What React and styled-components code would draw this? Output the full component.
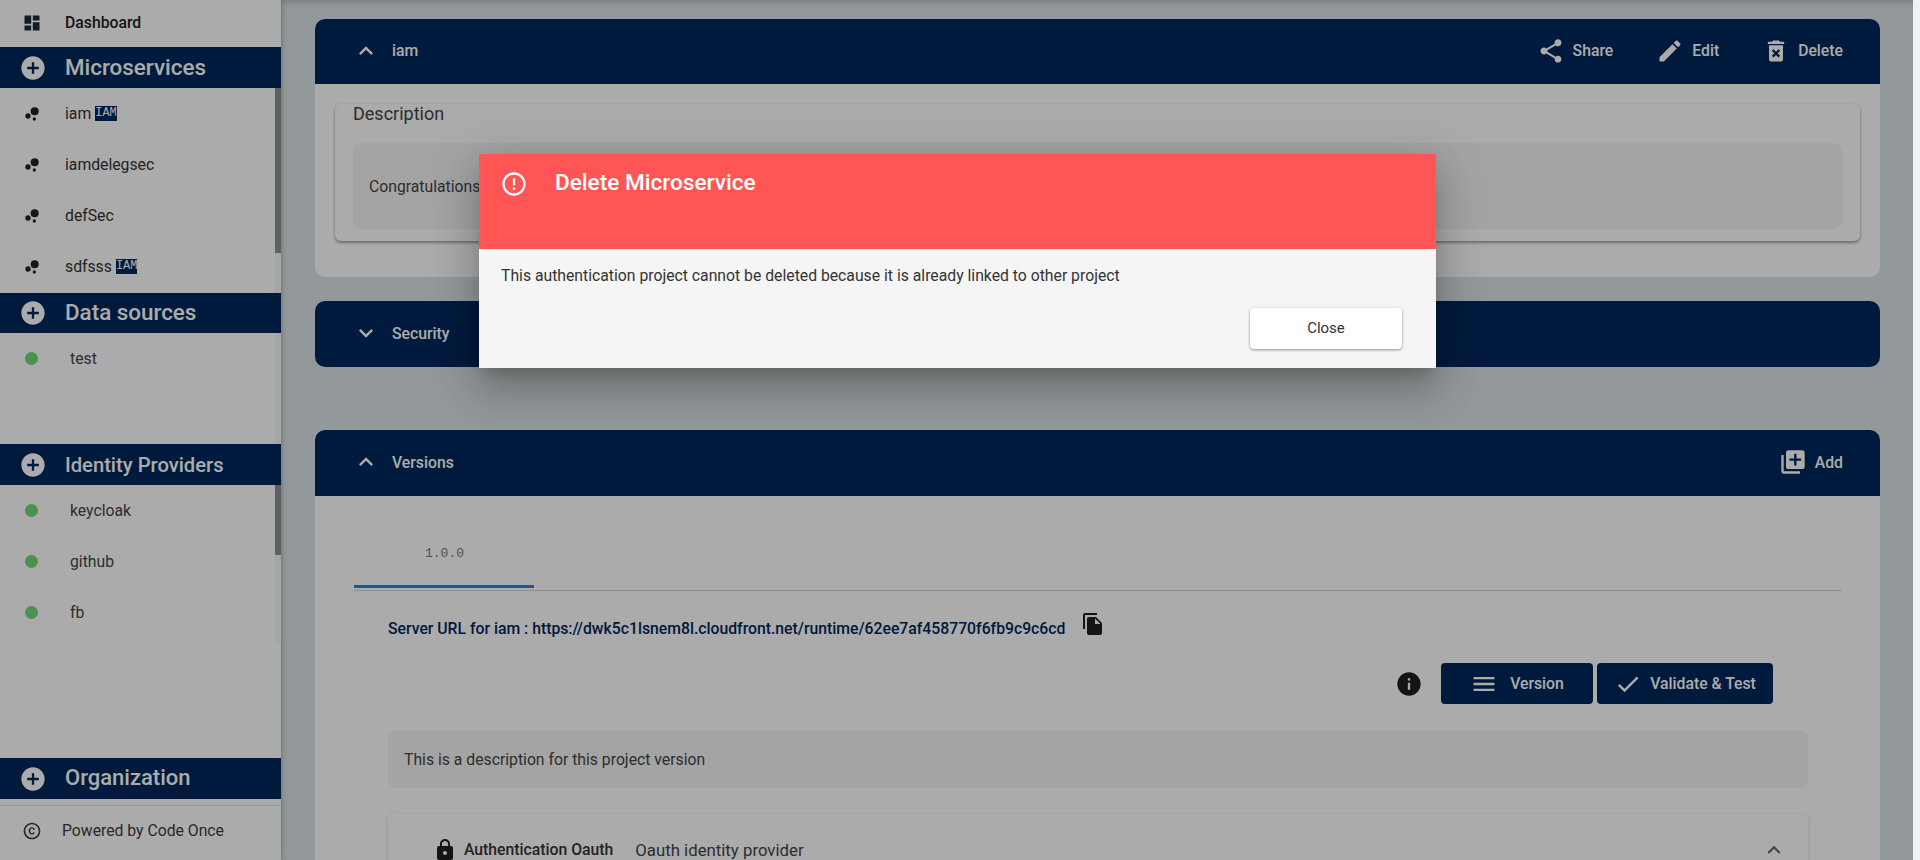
import React from "react";
import styled, { createGlobalStyle } from "styled-components";

const GlobalStyle = createGlobalStyle`
  html, body {
    margin: 0;
    height: 100%;
    overflow: hidden;
    background: #f1f1f1;
    font-family: Roboto, "Liberation Sans", sans-serif;
  }
  * { box-sizing: border-box; }
`;

const NAVY = "#00285b";

const paths = {
  dashboard: "M3 13h8V3H3v10zm0 8h8v-6H3v6zm10 0h8V11h-8v10zm0-18v6h8V3h-8z",
  addCircle: "M12 2C6.48 2 2 6.48 2 12s4.48 10 10 10 10-4.48 10-10S17.52 2 12 2zm5 11h-4v4h-2v-4H7v-2h4V7h2v4h4v2z",
  copyright: "M11.88 9.14c1.28.06 1.61 1.15 1.63 1.66h1.79c-.08-1.98-1.49-3.19-3.45-3.19C9.64 7.61 8 9 8 12.14c0 1.94.93 4.24 3.84 4.24 2.22 0 3.41-1.65 3.44-2.95h-1.79c-.03.59-.45 1.38-1.63 1.44-1.32-.04-1.86-1.07-1.86-2.73 0-2.87 1.27-2.98 1.88-3zM12 2C6.48 2 2 6.48 2 12s4.48 10 10 10 10-4.48 10-10S17.52 2 12 2zm0 18c-4.41 0-8-3.59-8-8s3.59-8 8-8 8 3.59 8 8-3.59 8-8 8z",
  share: "M18 16.08c-.76 0-1.44.3-1.96.77L8.91 12.7c.05-.23.09-.46.09-.7s-.04-.47-.09-.7l7.05-4.11c.54.5 1.25.81 2.04.81 1.66 0 3-1.34 3-3s-1.34-3-3-3-3 1.34-3 3c0 .24.04.47.09.7L8.04 9.81C7.5 9.31 6.79 9 6 9c-1.66 0-3 1.34-3 3s1.34 3 3 3c.79 0 1.5-.31 2.04-.81l7.12 4.16c-.05.21-.08.43-.08.65 0 1.61 1.31 2.92 2.92 2.92 1.61 0 2.92-1.31 2.92-2.92s-1.31-2.92-2.92-2.92z",
  edit: "M3 17.25V21h3.75L17.81 9.94l-3.75-3.75L3 17.25zM20.71 7.04c.39-.39.39-1.02 0-1.41l-2.34-2.34c-.39-.39-1.02-.39-1.41 0l-1.83 1.83 3.75 3.75 1.83-1.83z",
  deleteForever: "M6 19c0 1.1.9 2 2 2h8c1.1 0 2-.9 2-2V7H6v12zm2.46-7.12l1.41-1.41L12 12.59l2.12-2.12 1.41 1.41L13.41 14l2.12 2.12-1.41 1.41L12 15.41l-2.12 2.12-1.41-1.41L10.59 14l-2.13-2.12zM15.5 4l-1-1h-5l-1 1H5v2h14V4z",
  less: "M12 8l-6 6 1.41 1.41L12 10.83l4.59 4.58L18 14z",
  more: "M16.59 8.59L12 13.17 7.41 8.59 6 10l6 6 6-6z",
  libraryAdd: "M4 6H2v14c0 1.1.9 2 2 2h14v-2H4V6zm16-4H8c-1.1 0-2 .9-2 2v12c0 1.1.9 2 2 2h12c1.1 0 2-.9 2-2V4c0-1.1-.9-2-2-2zm-1 9h-4v4h-2v-4H9V9h4V5h2v4h4v2z",
  fileCopy: "M16 1H4c-1.1 0-2 .9-2 2v14h2V3h12V1zm-1 4l6 6v10c0 1.1-.9 2-2 2H7.99C6.89 23 6 22.1 6 21l.01-14c0-1.1.89-2 1.99-2h7zm-1 7h5.5L14 6.5V12z",
  info: "M12 2C6.48 2 2 6.48 2 12s4.48 10 10 10 10-4.48 10-10S17.52 2 12 2zm1 15h-2v-6h2v6zm0-8h-2V7h2v2z",
  menu: "M3 18h18v-2H3v2zm0-5h18v-2H3v2zm0-7v2h18V6H3z",
  check: "M9 16.17L4.83 12l-1.42 1.41L9 19 21 7l-1.41-1.41z",
  lock: "M18 8h-1V6c0-2.76-2.24-5-5-5S7 3.24 7 6v2H6c-1.1 0-2 .9-2 2v10c0 1.1.9 2 2 2h12c1.1 0 2-.9 2-2V10c0-1.1-.9-2-2-2zm-6 9c-1.1 0-2-.9-2-2s.9-2 2-2 2 .9 2 2-.9 2-2 2zm3.1-9H8.9V6c0-1.71 1.39-3.1 3.1-3.1 1.71 0 3.1 1.39 3.1 3.1v2z",
  errorOutline: "M11 15h2v2h-2zm0-8h2v6h-2zm.99-5C6.47 2 2 6.48 2 12s4.47 10 9.99 10C17.52 22 22 17.52 22 12S17.52 2 11.99 2zM12 20c-4.42 0-8-3.58-8-8s3.58-8 8-8 8 3.58 8 8-3.58 8-8 8z",
};

const Glyph = styled.svg`
  flex: none;
  display: block;
  fill: currentColor;
`;

const Icon = ({ name, size = 28 }) => (
  <Glyph width={size} height={size} viewBox="0 0 24 24">
    <path d={paths[name]} />
  </Glyph>
);

const BubbleIcon = () => (
  <Glyph width="20" height="20" viewBox="0 0 24 24">
    <circle cx="7.2" cy="14.4" r="3.2" />
    <circle cx="14.8" cy="18" r="2" />
    <circle cx="15.2" cy="8.8" r="4.8" />
  </Glyph>
);

const Page = styled.div`
  display: flex;
  width: 1920px;
  height: 860px;
  overflow: hidden;
`;

const Viewport = styled.div`
  position: relative;
  display: flex;
  flex: 1;
  min-width: 0;
  overflow: hidden;
  background: #dbe3e6;
`;

const PageScrollbar = styled.div`
  width: 7px;
  background: #f1f1f1;
`;

const Overlay = styled.div`
  position: absolute;
  inset: 0;
  background: rgba(0, 0, 0, 0.33);
`;

/* sidebar */
const Sidebar = styled.aside`
  display: flex;
  flex-direction: column;
  flex: none;
  width: 281px;
  background: #fff;
  box-shadow: 0 0 6px rgba(0, 0, 0, 0.3);
`;

const DashboardRow = styled.div`
  display: flex;
  align-items: center;
  gap: 23px;
  height: 47px;
  padding: 0 0 2px 22px;
  color: #1c2a3a;
  font-size: 15.75px;
  font-weight: 500;
  span { color: #222; }
`;

const SectionHead = styled.div`
  display: flex;
  align-items: center;
  gap: 18px;
  height: ${(p) => p.$height || 41}px;
  padding-left: 19px;
  background: ${NAVY};
  color: #fff;
  font-size: ${(p) => p.$size || 22.4}px;
  font-weight: 500;
`;

const HeadLabel = styled.span`
  position: relative;
  top: ${(p) => p.$nudge || 0}px;
`;

const SectionList = styled.div`
  position: relative;
  height: ${(p) => p.$height}px;
`;

const ListTrack = styled.div`
  position: absolute;
  top: 0;
  right: 0;
  width: 6px;
  height: ${(p) => p.$height}px;
  background: #f7f7f7;
`;

const ListThumb = styled.div`
  width: 6px;
  height: ${(p) => p.$height}px;
  background: #8f8f8f;
`;

const ServiceRow = styled.div`
  display: flex;
  align-items: center;
  height: 51px;
  padding-left: 22px;
  color: #333;
  font-size: 15.75px;
  svg { color: #222; margin-right: 23px; }
`;

const StatusRow = styled.div`
  display: flex;
  align-items: center;
  gap: 32px;
  height: 51px;
  padding-left: 25px;
  color: #444;
  font-size: 15.75px;
`;

const StatusDot = styled.i`
  width: 13px;
  height: 13px;
  border-radius: 50%;
  background: #73d877;
`;

const IamBadge = styled.code`
  margin-left: 4px;
  padding: 0 0 1px;
  background: ${NAVY};
  color: #fff;
  font-family: "Liberation Mono", monospace;
  font-size: 12px;
  line-height: 14px;
`;

const SideFooter = styled.div`
  display: flex;
  align-items: center;
  gap: 20px;
  height: 55px;
  margin-top: 6px;
  padding: 0 0 5px 22px;
  border-top: 1px solid #e0e0e0;
  color: #3c3c3c;
  font-size: 15.75px;
`;

/* content */
const Main = styled.main`
  flex: 1;
  min-width: 0;
  padding: 19px 33px 0 34px;
  box-shadow: inset 0 6px 6px -4px rgba(0, 0, 0, 0.2);
`;

const Panel = styled.section`
  margin-bottom: ${(p) => p.$gap || 0}px;
  border-radius: 10px;
  background: #fff;
`;

const PanelHead = styled.header`
  display: flex;
  align-items: center;
  justify-content: space-between;
  height: ${(p) => p.$height || 65}px;
  padding: 0 37px 2px;
  border-radius: ${(p) => (p.$closed ? "10px" : "10px 10px 0 0")};
  background: ${NAVY};
  color: #fff;
  font-size: 15.75px;
  font-weight: 500;
`;

const HeadTitle = styled.div`
  display: flex;
  align-items: center;
  gap: 12px;
`;

const HeadActions = styled.div`
  display: flex;
  align-items: center;
  gap: 43px;
`;

const HeadAction = styled.div`
  display: flex;
  align-items: center;
  gap: 8px;
`;

const DescriptionBody = styled.div`
  height: 193px;
  padding: 20px 20px 0;
`;

const Card = styled.div`
  height: 137px;
  padding: 0 18px;
  border-radius: 6px;
  background: #fff;
  box-shadow: 0 2px 3px rgba(0, 0, 0, 0.35), 0 0 3px rgba(0, 0, 0, 0.08);
`;

const CardTitle = styled.h3`
  margin: 0;
  height: 39px;
  color: #444;
  font-size: 18px;
  font-weight: 400;
  line-height: 19px;
`;

const GreyBox = styled.div`
  display: flex;
  align-items: center;
  height: ${(p) => p.$height}px;
  padding: 0 16px;
  border-radius: 8px;
  background: #f5f5f5;
  color: #444;
  font-size: 15.75px;
`;

const VersionBody = styled.div`
  padding: 0 38px 0 39px;
`;

const TabStrip = styled.div`
  display: flex;
  height: 95px;
  border-bottom: 1px solid #d4d4d4;
`;

const Tab = styled.div`
  width: 180px;
  height: 92px;
  padding: 50px 0 0 71px;
  border-bottom: 3px solid #1e88e5;
  color: #777;
  font-family: "Liberation Mono", monospace;
  font-size: 13px;
  line-height: 15px;
`;

const ServerLine = styled.div`
  display: flex;
  align-items: flex-start;
  gap: 16px;
  height: 72px;
  padding: 21px 0 0 34px;
  color: ${NAVY};
  font-size: 15.75px;
  font-weight: 500;
  p { margin: 8px 0 0; line-height: 18px; }
  svg { color: #1f1f1f; }
`;

const ButtonRow = styled.div`
  display: flex;
  align-items: center;
  justify-content: flex-end;
  gap: 4px;
  height: 41px;
  padding-right: 69px;
`;

const InfoSlot = styled.span`
  margin-right: 14px;
  color: #1f1f1f;
`;

const NavyButton = styled.button`
  display: flex;
  align-items: center;
  justify-content: center;
  gap: ${(p) => p.$gap}px;
  width: ${(p) => p.$width}px;
  height: 41px;
  border: 0;
  border-radius: 4px;
  background: ${NAVY};
  color: #fff;
  font-family: inherit;
  font-size: 15.75px;
  font-weight: 500;
`;

const Indented = styled.div`
  padding: 27px 34px 0 34px;
`;

const AuthCard = styled.div`
  display: flex;
  align-items: center;
  height: 70px;
  margin-top: 26px;
  padding: 1px 21px 0 45px;
  border-radius: 6px 6px 0 0;
  background: #fff;
  box-shadow: 0 1px 4px rgba(0, 0, 0, 0.14);
  color: #333;
  font-size: 15.75px;
  svg { color: #1f1f1f; }
`;

const AuthName = styled.strong`
  margin: 0 22px 0 7px;
  font-weight: 500;
`;

const AuthKind = styled.span`
  flex: 1;
  color: #444;
  font-size: 16.8px;
`;

const Chevron = styled.span`
  color: #666;
  svg { color: inherit; }
`;

/* dialog */
const Dialog = styled.div`
  position: absolute;
  top: 154px;
  left: 479px;
  width: 957px;
  height: 214px;
  background: #f5f5f5;
  box-shadow: 0 11px 15px -7px rgba(0, 0, 0, 0.2), 0 24px 38px 3px rgba(0, 0, 0, 0.14),
    0 9px 46px 8px rgba(0, 0, 0, 0.12);
`;

const DialogHead = styled.div`
  display: flex;
  align-items: flex-start;
  gap: 27px;
  height: 95px;
  padding: 16px 0 0 21px;
  background: #ff5555;
  color: #fff;
  font-size: 22.6px;
  font-weight: 500;
  line-height: 25px;
`;

const DialogText = styled.p`
  margin: 0;
  padding: 18px 22px 0;
  color: #333;
  font-size: 15.75px;
  line-height: 18px;
`;

const DialogActions = styled.div`
  display: flex;
  justify-content: flex-end;
  padding: 23px 34px 0 0;
`;

const CloseButton = styled.button`
  width: 152px;
  height: 41px;
  padding: 0 0 2px;
  border: 0;
  border-radius: 4px;
  background: #fff;
  box-shadow: 0 1px 3px rgba(0, 0, 0, 0.4);
  color: #333;
  font-family: inherit;
  font-size: 15px;
`;

const services = [
  { name: "iam", iam: true },
  { name: "iamdelegsec" },
  { name: "defSec" },
  { name: "sdfsss", iam: true },
];

export default function App() {
  return (
    <Page>
      <GlobalStyle />
      <Viewport>
        <Sidebar>
          <DashboardRow>
            <Icon name="dashboard" size={20} />
            <span>Dashboard</span>
          </DashboardRow>
          <SectionHead>
            <Icon name="addCircle" />
            <HeadLabel $nudge={-1}>Microservices</HeadLabel>
          </SectionHead>
          <SectionList $height={205}>
            {services.map((s) => (
              <ServiceRow key={s.name}>
                <BubbleIcon />
                {s.name}
                {s.iam && <IamBadge>IAM</IamBadge>}
              </ServiceRow>
            ))}
            <ListTrack $height={205}>
              <ListThumb $height={165} />
            </ListTrack>
          </SectionList>
          <SectionHead $height={40}>
            <Icon name="addCircle" />
            <HeadLabel $nudge={-1}>Data sources</HeadLabel>
          </SectionHead>
          <SectionList $height={111}>
            <StatusRow>
              <StatusDot />
              test
            </StatusRow>
            <ListTrack $height={111} />
          </SectionList>
          <SectionHead $size={20.2}>
            <Icon name="addCircle" />
            <HeadLabel>Identity Providers</HeadLabel>
          </SectionHead>
          <SectionList $height={273}>
            {["keycloak", "github", "fb"].map((n) => (
              <StatusRow key={n}>
                <StatusDot />
                {n}
              </StatusRow>
            ))}
            <ListTrack $height={158}>
              <ListThumb $height={70} />
            </ListTrack>
          </SectionList>
          <SectionHead $size={22}>
            <Icon name="addCircle" />
            <HeadLabel $nudge={-1}>Organization</HeadLabel>
          </SectionHead>
          <SideFooter>
            <Icon name="copyright" size={20} />
            Powered by Code Once
          </SideFooter>
        </Sidebar>

        <Main>
          <Panel $gap={24}>
            <PanelHead>
              <HeadTitle>
                <Icon name="less" />
                iam
              </HeadTitle>
              <HeadActions>
                <HeadAction>
                  <Icon name="share" />
                  Share
                </HeadAction>
                <HeadAction>
                  <Icon name="edit" />
                  Edit
                </HeadAction>
                <HeadAction>
                  <Icon name="deleteForever" />
                  Delete
                </HeadAction>
              </HeadActions>
            </PanelHead>
            <DescriptionBody>
              <Card>
                <CardTitle>Description</CardTitle>
                <GreyBox $height={86}>Congratulations</GreyBox>
              </Card>
            </DescriptionBody>
          </Panel>

          <Panel $gap={63}>
            <PanelHead $closed $height={66}>
              <HeadTitle>
                <Icon name="more" />
                Security
              </HeadTitle>
            </PanelHead>
          </Panel>

          <Panel>
            <PanelHead $height={66}>
              <HeadTitle>
                <Icon name="less" />
                Versions
              </HeadTitle>
              <HeadAction>
                <Icon name="libraryAdd" />
                Add
              </HeadAction>
            </PanelHead>
            <VersionBody>
              <TabStrip>
                <Tab>1.0.0</Tab>
              </TabStrip>
              <ServerLine>
                <p>Server URL for iam : https://dwk5c1lsnem8l.cloudfront.net/runtime/62ee7af458770f6fb9c9c6cd</p>
                <Icon name="fileCopy" size={24} />
              </ServerLine>
              <ButtonRow>
                <InfoSlot>
                  <Icon name="info" />
                </InfoSlot>
                <NavyButton $width={152} $gap={12}>
                  <Icon name="menu" />
                  Version
                </NavyButton>
                <NavyButton $width={176} $gap={8}>
                  <Icon name="check" />
                  Validate &amp; Test
                </NavyButton>
              </ButtonRow>
              <Indented>
                <GreyBox $height={57}>This is a description for this project version</GreyBox>
                <AuthCard>
                  <Icon name="lock" size={24} />
                  <AuthName>Authentication Oauth</AuthName>
                  <AuthKind>Oauth identity provider</AuthKind>
                  <Chevron>
                    <Icon name="less" size={26} />
                  </Chevron>
                </AuthCard>
              </Indented>
            </VersionBody>
          </Panel>
        </Main>

        <Overlay />
        <Dialog>
          <DialogHead>
            <Icon name="errorOutline" />
            <span>Delete Microservice</span>
          </DialogHead>
          <DialogText>
            This authentication project cannot be deleted because it is already linked to other project
          </DialogText>
          <DialogActions>
            <CloseButton>Close</CloseButton>
          </DialogActions>
        </Dialog>
      </Viewport>
      <PageScrollbar />
    </Page>
  );
}
